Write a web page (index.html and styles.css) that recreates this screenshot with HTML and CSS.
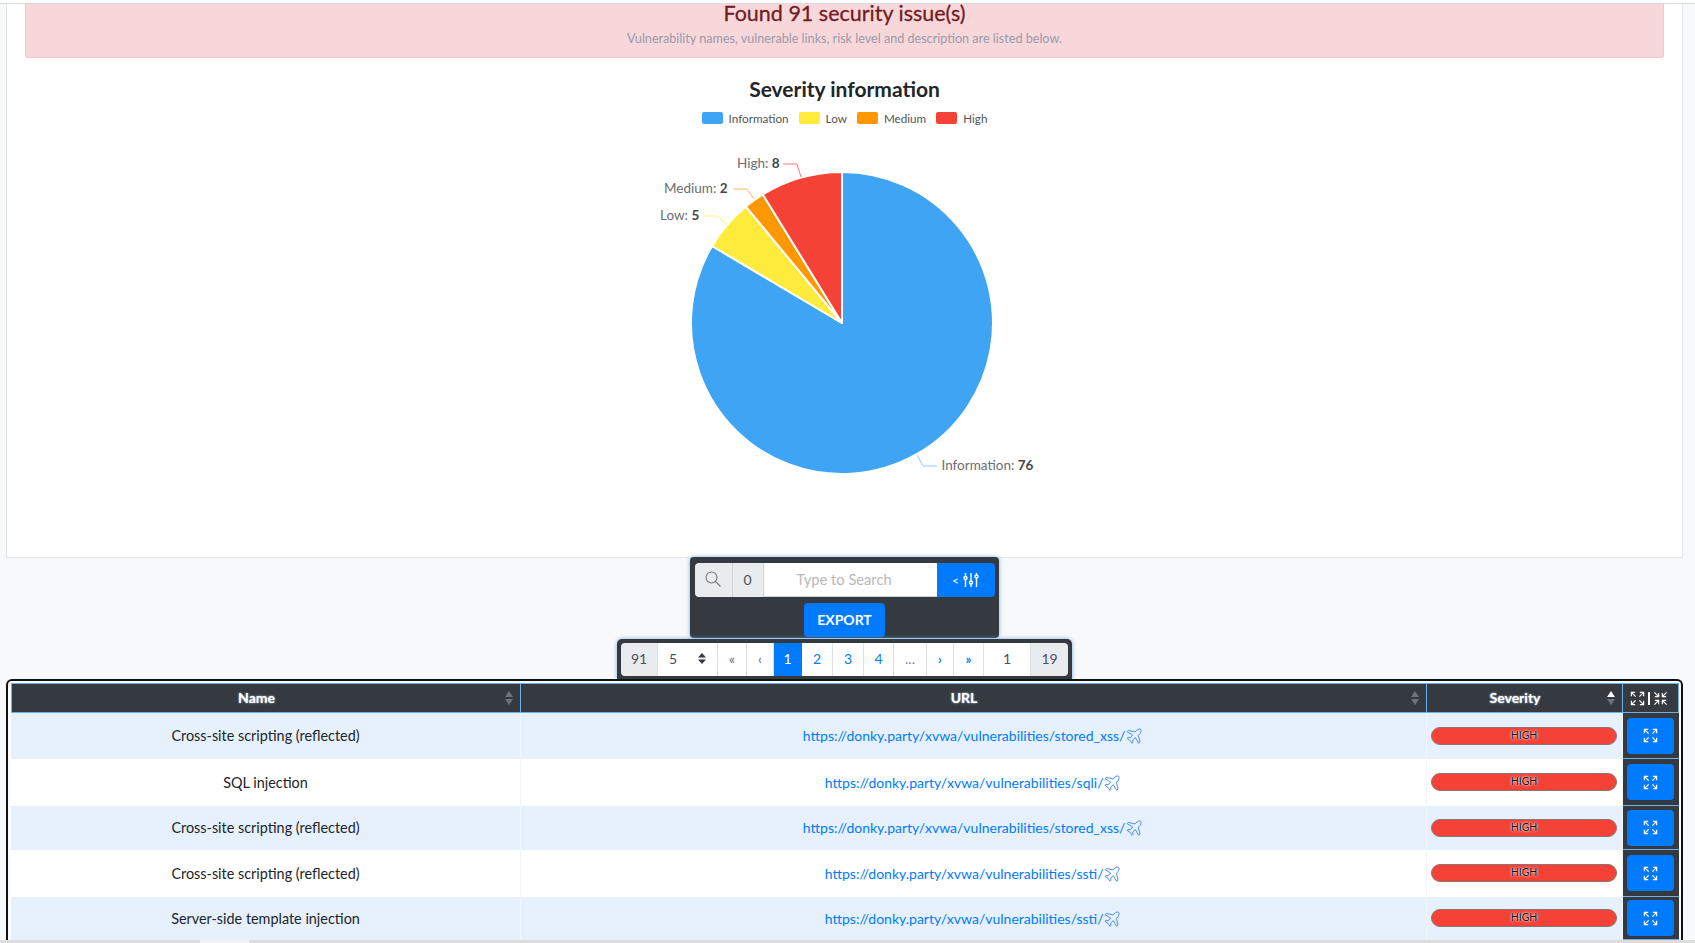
FILE: index.html
```html
<!DOCTYPE html>
<html lang="en">
<head>
  <meta charset="UTF-8">
  <title>Scan results</title>
  <link rel="stylesheet" href="styles.css">
</head>
<body>

  <svg class="icon-defs" aria-hidden="true">
    <symbol id="i-expand" viewBox="0 0 16 16">
      <path d="M1.500 5.500v-4h4M1.500 1.500 6 6M14.500 5.500v-4h-4M14.500 1.500 10 6M1.500 10.500v4h4M1.500 14.500 6 10M14.500 10.500v4h-4M14.500 14.500 10 10"/>
    </symbol>
    <symbol id="i-contract" viewBox="0 0 16 16">
      <path d="M6 2v4H2M6 6 1.500 1.500M10 2v4h4M10 6l4.500-4.500M6 14v-4H2M6 10l-4.500 4.500M10 14v-4h4M10 10l4.500 4.500"/>
    </symbol>
    <symbol id="i-plane" viewBox="0 0 24 24">
      <path d="M22 2c-1.200-1.200-4-.4-5.500 1.100L13.500 6 3.500 3.500 1.500 5.500 10 10.500 6.500 14.500 3 14 1.500 15.500l4.500 3 3 4.500 1.500-1.500-.5-3.500 4-3.500 5 8.500 2-2-2.500-10 2.900-3C22.400 6 23.200 3.200 22 2z"/>
    </symbol>
  </svg>

  <div class="top-line"></div>

  <section class="card">
    <div class="alert">
      <h2>Found 91 security issue(s)</h2>
      <p>Vulnerability names, vulnerable links, risk level and description are listed below.</p>
    </div>

    <h3 class="chart-title">Severity information</h3>
    <ul class="legend">
      <li><span class="swatch sw-info"></span>Information</li>
      <li><span class="swatch sw-low"></span>Low</li>
      <li><span class="swatch sw-medium"></span>Medium</li>
      <li><span class="swatch sw-high"></span>High</li>
    </ul>

    <!-- viewBox uses the same x/y as the page so the slices are easy to read -->
    <svg class="pie" viewBox="594 150 501 340" width="501" height="340">
      <g stroke="#fff" stroke-width="2" stroke-linejoin="round">
        <path fill="#40a4f5" d="M842 323V172A151 151 0 1 1 712.100 246Z"/>
        <path fill="#ffeb3b" d="M842 323 712.100 246A151 151 0 0 1 745.900 206.600Z"/>
        <path fill="#ff9800" d="M842 323 745.900 206.600A151 151 0 0 1 762.800 194.500Z"/>
        <path fill="#f44336" d="M842 323 762.800 194.500A151 151 0 0 1 842 172Z"/>
      </g>
      <g fill="none" stroke-width="1">
        <path stroke="#f77" d="M783 164h14l4 13"/>
        <path stroke="#ffb74d" d="M733 189h14l7 10"/>
        <path stroke="#fff176" d="M703 216h14l10 8"/>
        <path stroke="#90caf9" d="M917 455l6 11h14"/>
      </g>
      <g class="pie-labels">
        <text x="737" y="168">High: <tspan>8</tspan></text>
        <text x="664" y="192.500">Medium: <tspan>2</tspan></text>
        <text x="660" y="219.500">Low: <tspan>5</tspan></text>
        <text x="941.500" y="469.500">Information: <tspan>76</tspan></text>
      </g>
    </svg>
  </section>

  <div class="toolbar">
    <div class="search-group">
      <span class="addon">
        <svg width="16" height="16" viewBox="0 0 16 16" fill="none" stroke="#777" stroke-width="1.100">
          <circle cx="6.500" cy="6.500" r="5.500"/><path d="M10.500 10.500 15.500 15.500"/>
        </svg>
      </span>
      <span class="addon">0</span>
      <input class="search-input" type="text" placeholder="Type to Search">
      <button class="btn-blue search-opts">&lt;
        <svg width="16" height="14" viewBox="0 0 16 14" fill="none" stroke="#fff" stroke-width="1.400">
          <path d="M2.500 0v14M8 0v14M13.500 0v14"/>
          <circle cx="2.500" cy="5" r="1.500" fill="#007bff"/><circle cx="8" cy="9.500" r="1.500" fill="#007bff"/><circle cx="13.500" cy="3.500" r="1.500" fill="#007bff"/>
        </svg>
      </button>
    </div>
    <button class="btn-blue btn-export">EXPORT</button>
  </div>

  <nav class="pager">
    <span class="pg pg-grey pg-first">91</span>
    <span class="pg pg-select">5
      <svg width="8" height="11" viewBox="0 0 8 11" fill="#343a40"><path d="M4 0 8 4.500H0zM4 11 0 6.500H8z"/></svg>
    </span>
    <span class="pg pg-sym pg-dim">«</span>
    <span class="pg pg-sym pg-dim">‹</span>
    <span class="pg pg-on">1</span>
    <span class="pg">2</span>
    <span class="pg">3</span>
    <span class="pg">4</span>
    <span class="pg pg-dim">...</span>
    <span class="pg pg-sym">›</span>
    <span class="pg pg-sym">»</span>
    <span class="pg pg-dark">1</span>
    <span class="pg pg-grey pg-last">19</span>
  </nav>

  <div class="table-wrap">
    <table class="results">
      <colgroup>
        <col class="col-name"><col class="col-url"><col class="col-sev"><col class="col-act">
      </colgroup>
      <thead>
        <tr>
          <th>Name<span class="sort"></span></th>
          <th>URL<span class="sort"></span></th>
          <th>Severity<span class="sort sort-asc"></span></th>
          <th class="th-act">
            <svg class="ico"><use href="#i-expand"/></svg><span class="bar"></span><svg class="ico"><use href="#i-contract"/></svg>
          </th>
        </tr>
      </thead>
      <tbody>
        <tr>
          <td>Cross-site scripting (reflected)</td>
          <td><a href="#">https://donky.party/xvwa/vulnerabilities/stored_xss/</a> <svg class="plane"><use href="#i-plane"/></svg></td>
          <td><span class="pill">HIGH</span></td>
          <td class="td-act"><button class="btn-blue btn-row"><svg class="ico"><use href="#i-expand"/></svg></button></td>
        </tr>
        <tr>
          <td>SQL injection</td>
          <td><a href="#">https://donky.party/xvwa/vulnerabilities/sqli/</a> <svg class="plane"><use href="#i-plane"/></svg></td>
          <td><span class="pill">HIGH</span></td>
          <td class="td-act"><button class="btn-blue btn-row"><svg class="ico"><use href="#i-expand"/></svg></button></td>
        </tr>
        <tr>
          <td>Cross-site scripting (reflected)</td>
          <td><a href="#">https://donky.party/xvwa/vulnerabilities/stored_xss/</a> <svg class="plane"><use href="#i-plane"/></svg></td>
          <td><span class="pill">HIGH</span></td>
          <td class="td-act"><button class="btn-blue btn-row"><svg class="ico"><use href="#i-expand"/></svg></button></td>
        </tr>
        <tr>
          <td>Cross-site scripting (reflected)</td>
          <td><a href="#">https://donky.party/xvwa/vulnerabilities/ssti/</a> <svg class="plane"><use href="#i-plane"/></svg></td>
          <td><span class="pill">HIGH</span></td>
          <td class="td-act"><button class="btn-blue btn-row"><svg class="ico"><use href="#i-expand"/></svg></button></td>
        </tr>
        <tr>
          <td>Server-side template injection</td>
          <td><a href="#">https://donky.party/xvwa/vulnerabilities/ssti/</a> <svg class="plane"><use href="#i-plane"/></svg></td>
          <td><span class="pill">HIGH</span></td>
          <td class="td-act"><button class="btn-blue btn-row"><svg class="ico"><use href="#i-expand"/></svg></button></td>
        </tr>
      </tbody>
    </table>
  </div>

  <div class="h-scroll"><span class="h-thumb"></span></div>

</body>
</html>
```

FILE: styles.css
```css
* {
  box-sizing: border-box;
}

html, body {
  height: 100vh;
  overflow: hidden;
}

body {
  margin: 0;
  background: #f8f9fa;
  color: #212529;
  font-family: Lato, "Noto Sans", sans-serif;
  font-size: 14px;
}

.icon-defs {
  display: none;
}

.top-line {
  height: 4px;
  background: #fff;
  border-bottom: 1px solid #dcdcdc;
}

/* top card */
.card {
  margin: 0 12px 0 6px;
  height: 554px;
  background: #fff;
  border: 1px solid #e3e6e9;
  border-top: none;
  padding: 0 18px;
  display: flex;
  flex-direction: column;
  align-items: center;
}

.alert {
  align-self: stretch;
  height: 54px;
  background: #f8d7da;
  border: 1px solid #f5c6cb;
  border-top: none;
  border-radius: 0 0 3px 3px;
  text-align: center;
  color: #721c24;
}

.alert h2 {
  margin: -1px 0 0;
  font-size: 21.500px;
  line-height: 20px;
  font-weight: 400;
  -webkit-text-stroke: 0.3px #721c24;
}

.alert p {
  margin: 9px 0 0;
  font-size: 12.600px;
  line-height: 14px;
  color: #9a9aa8;
}

.chart-title {
  margin: 19px 0 0;
  font-size: 21px;
  line-height: 24px;
  font-weight: 700;
  color: #212529;
}

.legend {
  display: flex;
  gap: 10px;
  list-style: none;
  margin: 10px 0 0;
  padding: 0;
  font-size: 11.700px;
  line-height: 14px;
  color: #555;
}

.legend li {
  display: flex;
  align-items: center;
  gap: 6px;
}

.swatch {
  width: 21px;
  height: 12px;
  border-radius: 2px;
}

.sw-info { background: #40a4f5; }
.sw-low { background: #ffeb3b; }
.sw-medium { background: #ff9800; }
.sw-high { background: #f44336; }

.pie {
  display: block;
  margin-top: 25px;
  flex: none;
}

.pie-labels text {
  font-size: 13.500px;
  fill: #6c6c74;
}

.pie-labels tspan {
  font-weight: 700;
  fill: #44474e;
}

/* search box and pager */
.toolbar {
  width: 309px;
  height: 81px;
  margin: -1px 0 0 690px;
  padding: 6px 5px 0;
  background: #343a40;
  border-radius: 4px;
  box-shadow: 0 0 4px #74b2ea;
  display: flex;
  flex-direction: column;
  align-items: center;
  position: relative;
}

.search-group {
  display: grid;
  grid-template-columns: 38px 31px 173px 58px;
  height: 34px;
  width: 300px;
}

.addon {
  display: flex;
  align-items: center;
  justify-content: center;
  background: #e9ecef;
  border-right: 1px solid #ced4da;
  color: #495057;
  font-size: 14px;
  padding-bottom: 2px;
}

.addon:first-child {
  border-radius: 4px 0 0 4px;
}

.search-input {
  border: none;
  border-bottom: 1px solid #ced4da;
  background: #fff;
  min-width: 0;
  text-align: center;
  font: 14.700px Lato, sans-serif;
  padding: 0 12px 2px 0;
}

.search-input::placeholder {
  color: #b9b9b9;
}

.btn-blue {
  background: #007bff;
  color: #fff;
  border: none;
  border-radius: 4px;
  padding: 0;
  font-family: inherit;
}

.search-opts {
  border-radius: 0 4px 4px 0;
  display: flex;
  align-items: center;
  justify-content: center;
  gap: 4px;
  font-size: 12px;
}

.btn-export {
  margin-top: 6px;
  width: 81px;
  height: 34px;
  padding-bottom: 2px;
  font-size: 14px;
  font-weight: 700;
}

.pager {
  width: 455px;
  height: 44px;
  margin: 1px 0 0 617px;
  padding: 4px;
  background: #343a40;
  border-radius: 5px;
  box-shadow: 0 0 4px #74b2ea;
  display: grid;
  grid-template-columns: 37px 60px 29px 27px 28px 31px 31px 30px 33px 27px 30px 47px 37px;
  grid-template-rows: 33px;
  position: relative;
}

.pg {
  display: flex;
  align-items: center;
  justify-content: center;
  background: #fff;
  border-right: 1px solid #dee2e6;
  color: #007bff;
  font-size: 14px;
  padding-bottom: 2px;
}

.pg-grey {
  background: #e9ecef;
  color: #495057;
}

.pg-first { border-radius: 4px 0 0 4px; }
.pg-last { border-radius: 0 4px 4px 0; border-right: none; }

.pg-select {
  justify-content: space-between;
  padding: 0 11px 2px 11px;
  color: #495057;
}

.pg-sym { font-size: 13px; font-weight: 700; }
.pg-dim { color: #7d858d; }
.pg-dark { color: #495057; }

.pg-on {
  background: #007bff;
  border-right-color: #007bff;
  color: #fff;
}

/* results table */
.table-wrap {
  position: relative;
  margin: -4px 12px 0 6px;
  padding: 2px 2px 0 3px;
  background: #fbfcfd;
  border: 2px solid #111;
  border-bottom: none;
  border-radius: 6px 6px 0 0;
}

.results {
  width: 100%;
  table-layout: fixed;
  border-collapse: separate;
  border-spacing: 0;
  text-align: center;
}

.col-name { width: 510px; }
.col-url { width: 906px; }
.col-sev { width: 196px; }
.col-act { width: 56px; }

.results th {
  position: relative;
  height: 30px;
  padding: 0 19px 2px 0;
  background: #343a40;
  color: #fff;
  font-size: 14px;
  font-weight: 700;
  text-shadow: 0 0 2px #cfe6ff;
  border: 1px solid #6cb0f0;
  border-left: none;
}

.results th:first-child {
  border-left: 1px solid #6cb0f0;
}

/* two stacked triangles in the corner of a header cell */
.sort {
  position: absolute;
  right: 7px;
  top: 7px;
  width: 8px;
  height: 14px;
}

.sort::before,
.sort::after {
  content: "";
  position: absolute;
  left: 0;
  border-left: 4px solid transparent;
  border-right: 4px solid transparent;
}

.sort::before {
  top: 0;
  border-bottom: 6px solid #6c757d;
}

.sort::after {
  bottom: 0;
  border-top: 6px solid #6c757d;
}

.sort-asc::before {
  border-bottom-color: #fff;
}

.th-act.th-act {
  padding: 0 4px 2px 0;
  white-space: nowrap;
}

.ico {
  width: 15px;
  height: 15px;
  fill: none;
  stroke: #fff;
  stroke-width: 1.300;
  vertical-align: middle;
}

.bar {
  display: inline-block;
  width: 2px;
  height: 13px;
  margin: 0 3px;
  background: #fff;
  vertical-align: middle;
}

.results td {
  padding: 0 0 1px;
  background: #fff;
  border-right: 1px solid #f1f6fc;
  font-size: 14.400px;
}

.results tbody tr:nth-child(odd) td {
  background: #e6f1fd;
}

.results tbody tr:nth-child(1) td { height: 46px; }
.results tbody tr:nth-child(2) td { height: 47px; }
.results tbody tr:nth-child(3) td { height: 44px; }
.results tbody tr:nth-child(4) td { height: 47px; }
.results tbody tr:nth-child(5) td { height: 43px; }

.results a {
  color: #007bff;
  font-size: 14px;
  text-decoration: none;
}

.plane {
  width: 16px;
  height: 16px;
  margin: 0 2px 0 -3px;
  fill: none;
  stroke: #4a90f0;
  stroke-width: 1.500;
  vertical-align: -3px;
}

.pill {
  display: block;
  height: 18px;
  margin: 0 5px 0 4px;
  background: #f44336;
  border: 1px solid #8a7474;
  border-radius: 9px;
  color: #111;
  font-size: 10.500px;
  line-height: 14px;
  text-shadow: 0 0 3px #fff, 0 0 1px #fff;
}

.results tbody tr td.td-act {
  padding: 0;
  background: #343a40;
  border-right: none;
  border-bottom: 1px solid #6cb0f0;
}

.btn-row {
  display: block;
  width: 47px;
  height: 36px;
  margin: 0 0 0 4px;
  padding-bottom: 2px;
}

.h-scroll {
  position: fixed;
  left: 0;
  right: 0;
  bottom: 0;
  height: 3px;
  background: #dcdcdc;
}

.h-thumb {
  display: block;
  width: 49px;
  height: 3px;
  margin-left: 200px;
  background: #f2f2f2;
}
```
